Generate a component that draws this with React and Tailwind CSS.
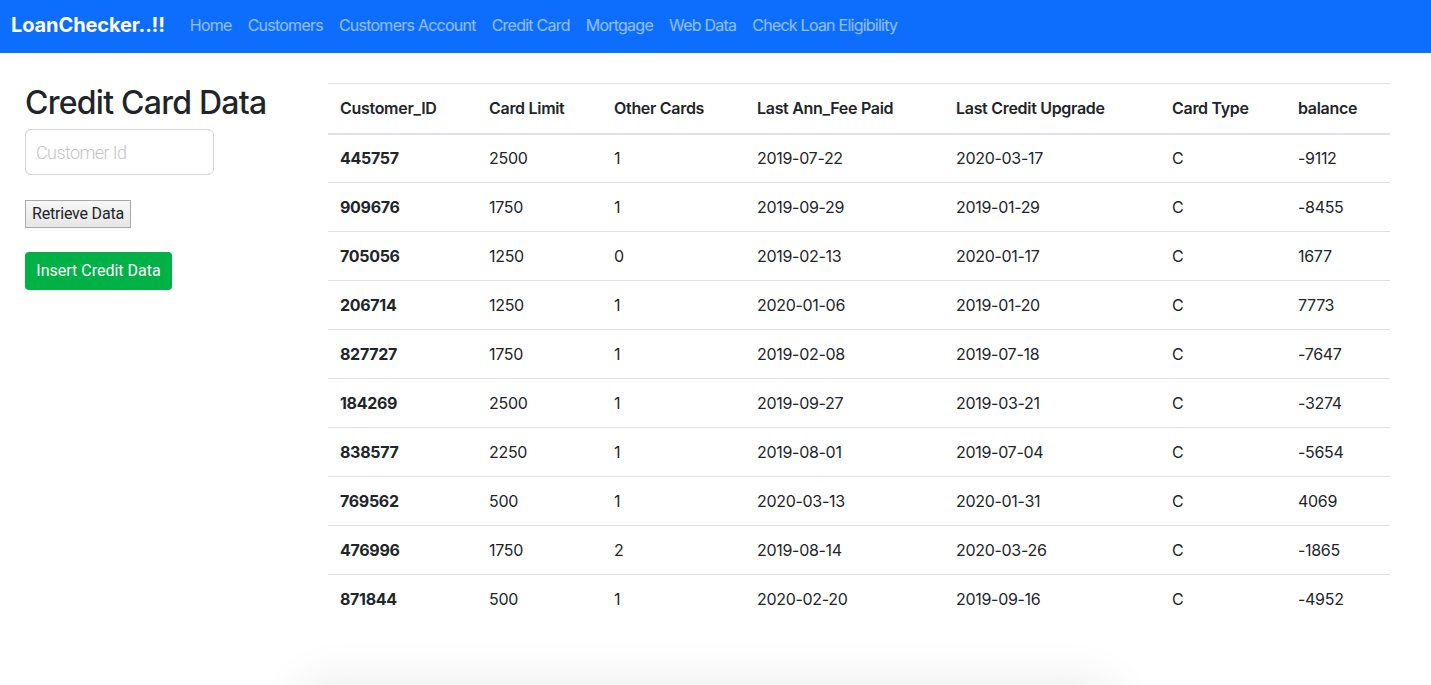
import React from "react";

const navLinks = [
  "Home",
  "Customers",
  "Customers Account",
  "Credit Card",
  "Mortgage",
  "Web Data",
  "Check Loan Eligibility",
];

const columns = [
  { label: "Customer_ID", w: "w-[149px]" },
  { label: "Card Limit", w: "w-[125px]" },
  { label: "Other Cards", w: "w-[143px]" },
  { label: "Last Ann_Fee Paid", w: "w-[199px]" },
  { label: "Last Credit Upgrade", w: "w-[216px]" },
  { label: "Card Type", w: "w-[126px]" },
  { label: "balance", w: "w-[104px]" },
];

const rows = [
  ["445757", "2500", "1", "2019-07-22", "2020-03-17", "C", "-9112"],
  ["909676", "1750", "1", "2019-09-29", "2019-01-29", "C", "-8455"],
  ["705056", "1250", "0", "2019-02-13", "2020-01-17", "C", "1677"],
  ["206714", "1250", "1", "2020-01-06", "2019-01-20", "C", "7773"],
  ["827727", "1750", "1", "2019-02-08", "2019-07-18", "C", "-7647"],
  ["184269", "2500", "1", "2019-09-27", "2019-03-21", "C", "-3274"],
  ["838577", "2250", "1", "2019-08-01", "2019-07-04", "C", "-5654"],
  ["769562", "500", "1", "2020-03-13", "2020-01-31", "C", "4069"],
  ["476996", "1750", "2", "2019-08-14", "2020-03-26", "C", "-1865"],
  ["871844", "500", "1", "2020-02-20", "2019-09-16", "C", "-4952"],
];

export default function App() {
  return (
    <div className="h-[685px] overflow-hidden bg-white text-[#212529] font-['Inter','Noto_Sans',sans-serif]">
      <nav className="flex h-[53px] items-center bg-[#0d6efd] pb-[4px] pl-[11px]">
        <span className="mr-[17px] text-[20px] font-bold tracking-[-0.1px] text-white">LoanChecker..!!</span>
        <div className="flex">
          {navLinks.map((l) => (
            <a key={l} className="px-[8px] text-[16px] tracking-[-0.76px] text-white/55">
              {l}
            </a>
          ))}
        </div>
      </nav>

      <div className="flex">
        <div className="w-[328px] shrink-0 pl-[25px] pt-[31px]">
          <h2 className="text-[32px] font-medium leading-[1.2] tracking-[-0.75px]">Credit Card Data</h2>
          <input
            placeholder="Customer Id"
            className="mt-[7px] h-[46px] w-[189px] rounded-[6px] border border-[#ced4da] px-[10px] text-[18px] font-light tracking-[-0.6px] placeholder:text-[#c4c4c4] outline-none font-['Roboto',sans-serif]"
          />
          <div className="mt-[25px]">
            <button className="h-[28px] border border-[#a8a8a8] bg-gradient-to-b from-[#f7f7f7] to-[#e6e6e6] px-[6px] text-[16px] tracking-[-0.2px] text-[#212529] font-['Roboto',sans-serif]">
              Retrieve Data
            </button>
          </div>
          <div className="mt-[24px]">
            <button className="h-[38px] w-[147px] rounded-[4px] bg-[#00b246] text-[16px] text-white font-['Roboto',sans-serif]">
              Insert Credit Data
            </button>
          </div>
        </div>

        <div className="pt-[30px]">
          <table className="w-[1062px] table-fixed border-collapse text-[16px] tracking-[-0.3px]">
            <thead>
              <tr className="border-t border-b-2 border-[#dee2e6]">
                {columns.map((c) => (
                  <th key={c.label} className={`${c.w} h-[50px] px-[12px] text-left font-semibold`}>
                    {c.label}
                  </th>
                ))}
              </tr>
            </thead>
            <tbody>
              {rows.map((r, i) => (
                <tr key={r[0]} className={i < rows.length - 1 ? "border-b border-[#dee2e6]" : ""}>
                  {r.map((v, j) => (
                    <td key={j} className={`h-[49px] px-[12px] ${j === 0 ? "font-bold" : ""}`}>
                      {v}
                    </td>
                  ))}
                </tr>
              ))}
            </tbody>
          </table>
        </div>
      </div>

      <div className="mx-auto mt-[68px] h-[40px] w-[800px] translate-x-[-10px] rounded-[20px] bg-white shadow-[0_0_45px_12px_rgba(0,0,0,0.08)]"></div>
    </div>
  );
}
